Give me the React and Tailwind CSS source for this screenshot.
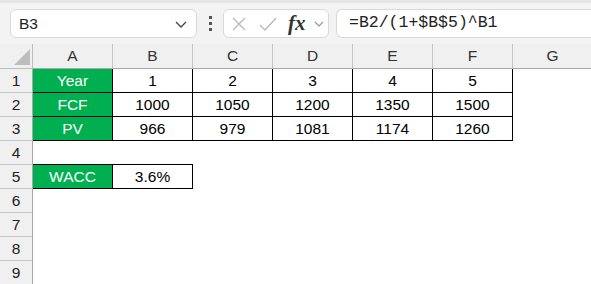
import React from 'react';

const cols = ['A', 'B', 'C', 'D', 'E', 'F', 'G'];

// row number -> cell values (A..G); null = empty
const data = {
  1: ['Year', '1', '2', '3', '4', '5'],
  2: ['FCF', '1000', '1050', '1200', '1350', '1500'],
  3: ['PV', '966', '979', '1081', '1174', '1260'],
  4: [],
  5: ['WACC', '3.6%'],
  6: [],
  7: [],
  8: [],
  9: [],
};

const cellClass = (row, ci) => {
  const inTable = (row <= 3 && ci <= 5) || (row === 5 && ci <= 1);
  let cls = 'h-6 flex items-center justify-center text-[15.5px] ';
  if (inTable) {
    cls += 'border-r border-b border-black ';
    cls += ci === 0 ? 'bg-[#00b050] text-white ' : 'bg-white text-black ';
  } else if (row === 4 && ci <= 1) {
    cls += 'border-b border-black bg-white ';
  } else {
    cls += 'bg-white ';
  }
  return cls;
};

export default function App() {
  return (
    <div className="w-[591px] h-[284px] overflow-hidden bg-white" style={{ fontFamily: '"Liberation Sans", Arial, sans-serif' }}>
      {/* Formula bar */}
      <div className="h-[44px] bg-[#f3f3f3] border-t-[3px] border-[#e6e6e6] flex items-center pl-[10px] gap-0">
        <div className="w-[187px] h-[29px] bg-white border border-[#d9d9d9] rounded-md flex items-center justify-between pl-[8px] pr-[8px]">
          <span className="text-[15.5px] text-[#222]">B3</span>
          <svg width="14" height="10" viewBox="0 0 14 10" fill="none" stroke="#444" strokeWidth="1.3">
            <path d="M2 3 L7 8 L12 3" />
          </svg>
        </div>
        <div className="w-[26px] flex flex-col items-center gap-[3px]">
          <span className="w-[3px] h-[3px] bg-[#555]" />
          <span className="w-[3px] h-[3px] bg-[#555]" />
          <span className="w-[3px] h-[3px] bg-[#555]" />
        </div>
        <div className="w-[106px] h-[29px] bg-white border border-[#d9d9d9] rounded-md flex items-center pl-[6px]">
          <svg width="16" height="16" viewBox="0 0 16 16" fill="none" stroke="#b8b8b8" strokeWidth="1.3" className="ml-[1px]">
            <path d="M2 2 L14 14 M14 2 L2 14" />
          </svg>
          <svg width="18" height="16" viewBox="0 0 18 16" fill="none" stroke="#b8b8b8" strokeWidth="1.3" className="ml-[12px]">
            <path d="M1 9 L6 14 L17 2" />
          </svg>
          <span className="ml-[11px] text-[21px] font-bold italic text-[#333] leading-none" style={{ fontFamily: '"Liberation Serif", "Times New Roman", serif' }}>
            fx
          </span>
          <svg width="12" height="10" viewBox="0 0 12 10" fill="none" stroke="#999" strokeWidth="1.2" className="ml-[7px]">
            <path d="M2 3 L6 7 L10 3" />
          </svg>
        </div>
        <div className="ml-[7px] flex-1 h-[29px] bg-white border border-r-0 border-[#d9d9d9] rounded-l-md flex items-center pl-[12px]">
          <span className="text-[16.5px] text-[#222]" style={{ fontFamily: '"Liberation Mono", "Courier New", monospace' }}>
            =B2/(1+$B$5)^B1
          </span>
        </div>
      </div>

      {/* Grid */}
      <div className="grid grid-cols-[33px_repeat(7,80px)]">
        <div className="h-[25px] bg-[#f0f0f0] border-r border-b border-[#bdbdbd] relative">
          <svg width="16" height="16" viewBox="0 0 16 16" className="absolute right-[2px] bottom-[3px]">
            <polygon points="16,0 16,16 0,16" fill="#bdbdbd" />
          </svg>
        </div>
        {cols.map((c) => (
          <div key={c} className="h-[25px] bg-[#f0f0f0] border-r border-b border-[#c6c6c6] border-b-[#a8a8a8] flex items-center justify-center text-[15.5px] text-[#333]">
            {c}
          </div>
        ))}
        {Object.keys(data).map((r) => {
          const row = Number(r);
          return (
            <React.Fragment key={row}>
              <div className="h-6 bg-[#f0f0f0] border-r border-b border-r-[#a8a8a8] border-b-[#c8c8c8] flex items-center justify-center text-[15.5px] text-[#222]">
                {row}
              </div>
              {cols.map((c, ci) => (
                <div key={c} className={cellClass(row, ci)}>
                  {data[row][ci] || ''}
                </div>
              ))}
            </React.Fragment>
          );
        })}
      </div>
    </div>
  );
}
